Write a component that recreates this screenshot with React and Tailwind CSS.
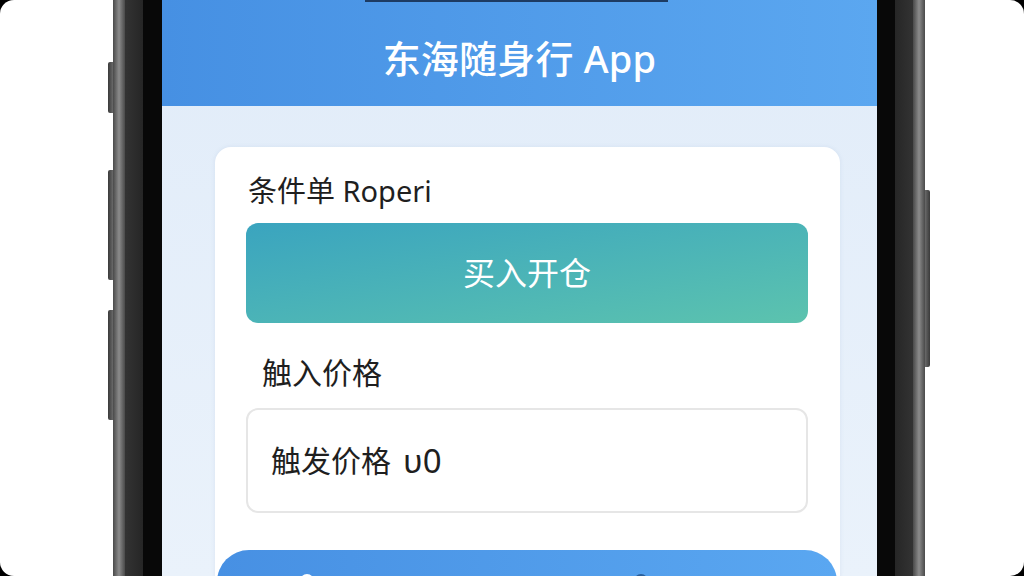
import React from "react";

const font = { fontFamily: '"Noto Sans", "Noto Sans CJK SC", sans-serif' };

function EdgeStrip() {
  return <div className="w-[12px] h-full bg-gradient-to-r from-[#4a4a4a] via-[#8c8c8c] to-[#4a4a4a]" />;
}

export default function App() {
  return (
    <div className="w-[1024px] h-[576px] bg-black overflow-hidden" style={font}>
      <div className="w-full h-full bg-white rounded-[14px] flex flex-row overflow-hidden">
        <div className="w-[108px] h-full" />
        {/* left side buttons */}
        <div className="w-[5px] h-full flex flex-col">
          <div className="mt-[62px] h-[51px] w-full shrink-0 rounded-l-[2px] bg-gradient-to-r from-[#3a3a3a] to-[#6a6a6a]" />
          <div className="mt-[57px] h-[110px] w-full shrink-0 rounded-l-[2px] bg-gradient-to-r from-[#3a3a3a] to-[#6a6a6a]" />
          <div className="mt-[30px] h-[110px] w-full shrink-0 rounded-l-[2px] bg-gradient-to-r from-[#3a3a3a] to-[#6a6a6a]" />
        </div>
        {/* phone frame left */}
        <EdgeStrip />
        <div className="w-[18px] h-full bg-gradient-to-r from-[#333333] to-[#262626]" />
        <div className="w-[19px] h-full bg-[#080808]" />
        {/* screen */}
        <div className="w-[715px] h-full flex flex-col overflow-hidden bg-gradient-to-b from-[#e1ecf9] to-[#eaf2fb]">
          <div className="h-[106px] shrink-0 flex flex-col items-center bg-gradient-to-r from-[#4690e3] to-[#5ba7f0]">
            <div className="h-[2px] w-[303px] -ml-[6px] shrink-0 bg-[#1d3b63]" />
            <div className="mt-[31px] text-[38px] leading-[50px] font-medium text-white tracking-[0.2px]">东海随身行 App</div>
          </div>
          <div className="pl-[53px] pt-[41px] shrink-0">
            <div className="w-[625px] bg-white rounded-[16px] shadow-[0_0_4px_rgba(120,150,190,0.15)] flex flex-col">
              <div className="pl-[31px] w-[593px] flex flex-col">
                <div className="pt-[26px] pl-[2px] text-[29px] leading-[36px] text-[#1f1f1f]">条件单 Roperi</div>
                <div className="mt-[14px] h-[100px] rounded-[12px] bg-gradient-to-br from-[#3aa4bf] to-[#5cc3ae] flex items-center justify-center text-white text-[32px] leading-[40px]">
                  买入开仓
                </div>
                <div className="mt-[32px] pl-[16px] text-[30px] leading-[36px] text-[#1f1f1f]">触入价格</div>
                <div className="mt-[17px] h-[105px] rounded-[12px] border-[2px] border-[#e6e6e6] flex items-center pl-[23px] text-[30px] leading-[36px] text-[#1f1f1f]">
                  触发价格<span className="ml-[12px] text-[33px]">υ0</span>
                </div>
              </div>
              <div className="mt-[37px] ml-[2px] w-[620px] h-[40px] rounded-t-[32px] bg-gradient-to-r from-[#4790e3] to-[#5aa7f1] flex flex-row pt-[24px]">
                <div className="ml-[83px] w-[14px] h-[14px] rounded-full bg-white" />
                <div className="ml-[320px] w-[14px] h-[14px] rounded-full bg-[#2a5f9a]" />
              </div>
            </div>
          </div>
        </div>
        {/* phone frame right */}
        <div className="w-[18px] h-full bg-[#080808]" />
        <div className="w-[18px] h-full bg-gradient-to-r from-[#262626] to-[#333333]" />
        <EdgeStrip />
        <div className="w-[5px] h-full flex flex-col">
          <div className="mt-[190px] h-[177px] w-full shrink-0 rounded-r-[2px] bg-gradient-to-r from-[#6a6a6a] to-[#3a3a3a]" />
        </div>
        <div className="flex-1 h-full" />
      </div>
    </div>
  );
}
